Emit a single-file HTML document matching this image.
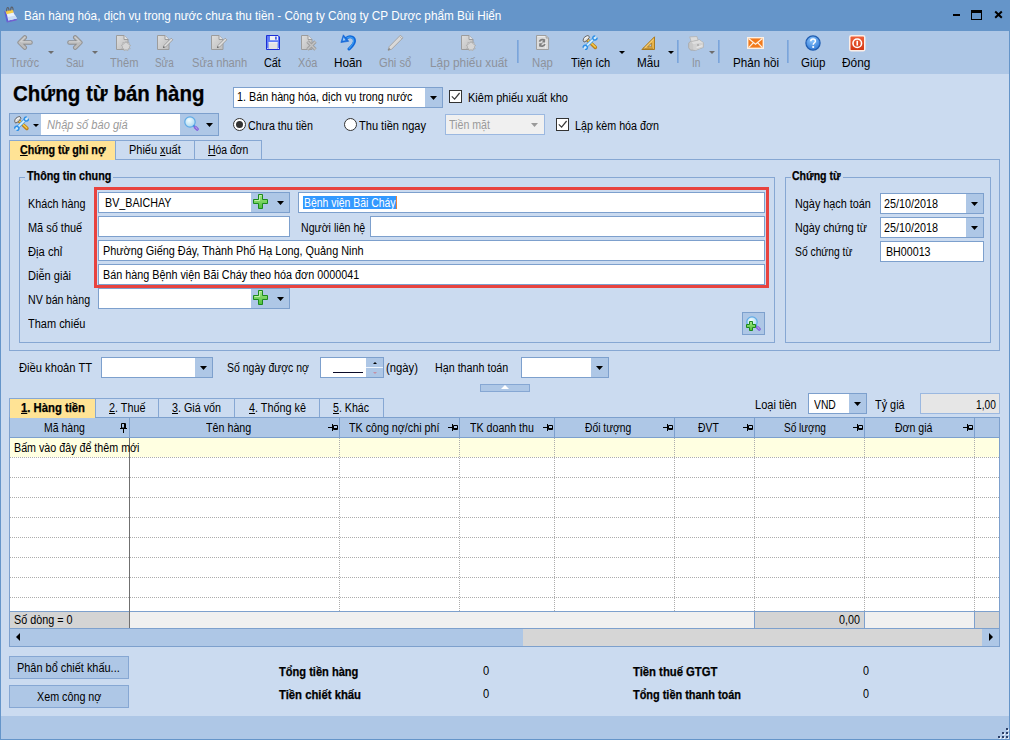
<!DOCTYPE html>
<html>
<head>
<meta charset="utf-8">
<title>Chứng từ bán hàng</title>
<style>
*{box-sizing:border-box;margin:0;padding:0}
html,body{width:1010px;height:740px;overflow:hidden;background:#cbdbf0}
body{font-family:"Liberation Sans",sans-serif;font-size:12px;color:#000;position:relative}
.a{position:absolute}
.t{position:absolute;white-space:nowrap;line-height:1;transform-origin:0 50%}
.bd{font-weight:bold;-webkit-text-stroke:.25px #000}
.inp{position:absolute;background:#fff;border:1px solid #7da0cd;height:21px}
.cb{position:absolute;top:0;right:0;bottom:0;width:18px;background:#aec7e6}
.ar{position:absolute;width:7px;height:4px}
.grp{position:absolute;border:1px solid #86a7d3}
.gm{position:absolute;top:-1px;height:1px;background:#cbdbf0}
.tab{position:absolute;border:1px solid #86a7d3;border-bottom:none}
.tab.sel{background:#ffe395}
.chk{position:absolute;width:13px;height:13px;background:#fff;border:1px solid #333}
.rad{position:absolute;width:13px;height:13px;background:#fff;border:1px solid #333;border-radius:50%}
.hd{position:absolute;top:418px;height:19px;border-right:1px solid #7da0cd}
.btn{position:absolute;height:23px;background:#aec7e6;border:1px solid #86a7d3}
.sep{position:absolute;top:40px;width:2px;height:23px;background:linear-gradient(to right,#729fd8,#94b6e2)}
.hl{position:absolute;left:10px;width:989px;height:1px;background-image:linear-gradient(to right,#adadad 50%,rgba(255,255,255,0) 50%);background-size:2px 1px}
.vl{position:absolute;top:438px;width:1px;height:173px;background-image:linear-gradient(to bottom,#adadad 50%,rgba(255,255,255,0) 50%);background-size:1px 2px}
</style>
</head>
<body>
<!-- window chrome -->
<div class="a" style="left:0;top:0;width:1010px;height:31px;background:#6595c9"></div>
<div class="a" style="left:1px;top:31px;width:1008px;height:43px;background:#aec7e6"></div>
<div class="a" style="left:1px;top:716px;width:1008px;height:23px;background:#aec7e6"></div>
<div class="a" style="left:0;top:31px;width:1px;height:709px;background:#6595c9"></div>
<div class="a" style="left:1009px;top:31px;width:1px;height:709px;background:#6595c9"></div>
<div class="a" style="left:0;top:739px;width:1010px;height:1px;background:#6595c9"></div>
<!-- window controls -->
<div class="a" style="left:953px;top:14px;width:7px;height:2px;background:#000"></div>
<div class="a" style="left:971px;top:10px;width:11px;height:10px;border:1px solid #000;border-top-width:3px"></div>
<svg class="a" style="left:994px;top:10px" width="9" height="9" viewBox="0 0 9 9"><path d="M1.2 1.6L7.8 7.8M7.8 1.6L1.2 7.8" stroke="#000" stroke-width="2" fill="none"/></svg>
<!-- shapes -->
<div class="sep" style="left:517px"></div>
<div class="sep" style="left:677px"></div>
<div class="sep" style="left:718px"></div>
<div class="sep" style="left:787px"></div>
<svg class="a" style="left:48px;top:51px" width="6" height="3" viewBox="0 0 6 3"><path d="M0 0H6L3 3Z" fill="#6e6e6e"/></svg>
<svg class="a" style="left:92px;top:51px" width="6" height="3" viewBox="0 0 6 3"><path d="M0 0H6L3 3Z" fill="#6e6e6e"/></svg>
<svg class="a" style="left:618.5px;top:51px" width="6" height="3" viewBox="0 0 6 3"><path d="M0 0H6L3 3Z" fill="#000"/></svg>
<svg class="a" style="left:667.5px;top:51px" width="6" height="3" viewBox="0 0 6 3"><path d="M0 0H6L3 3Z" fill="#000"/></svg>
<svg class="a" style="left:709px;top:51px" width="6" height="3" viewBox="0 0 6 3"><path d="M0 0H6L3 3Z" fill="#6e6e6e"/></svg>
<div class="inp" style="left:233px;top:87px;width:210px;height:21px;"><div class="cb" style="width:17px"></div></div><svg class="a" style="left:430px;top:96px" width="7" height="4" viewBox="0 0 7 4"><path d="M0 0H7L3.5 4Z" fill="#000"/></svg>
<div class="chk" style="left:449px;top:90px"><svg width="11" height="11" viewBox="0 0 11 11" style="display:block"><path d="M1.8 5.4L4.6 8.2L9.6 2" fill="none" stroke="#3a3a3a" stroke-width="1.2"/></svg></div>
<div class="a" style="left:9px;top:113px;width:210px;height:23px;background:#aec7e6;border:1px solid #7da0cd"></div>
<div class="a" style="left:41px;top:114px;width:139px;height:21px;background:#fff"></div>
<svg class="a" style="left:33px;top:124px" width="6" height="3" viewBox="0 0 6 3"><path d="M0 0H6L3 3Z" fill="#000"/></svg>
<svg class="a" style="left:206px;top:123px" width="7" height="4" viewBox="0 0 7 4"><path d="M0 0H7L3.5 4Z" fill="#000"/></svg>
<div class="rad" style="left:233px;top:118px"><div class="a" style="left:2px;top:2px;width:7px;height:7px;border-radius:50%;background:#333"></div></div>
<div class="rad" style="left:344px;top:118px"></div>
<div class="inp" style="left:445px;top:114px;width:100px;height:21px;background:#f0f0f0;border-color:#9bb8e0"></div>
<svg class="a" style="left:531px;top:123px" width="7" height="4" viewBox="0 0 7 4"><path d="M0 0H7L3.5 4Z" fill="#9a9a9a"/></svg>
<div class="chk" style="left:556px;top:118px"><svg width="11" height="11" viewBox="0 0 11 11" style="display:block"><path d="M1.8 5.4L4.6 8.2L9.6 2" fill="none" stroke="#3a3a3a" stroke-width="1.2"/></svg></div>
<div class="a" style="left:9px;top:159px;width:991px;height:192px;border:1px solid #86a7d3"></div>
<div class="tab sel" style="left:9px;top:140px;width:107px;height:20px"></div>
<div class="tab" style="left:115px;top:140px;width:80px;height:19px"></div>
<div class="tab" style="left:194px;top:140px;width:68px;height:19px"></div>
<div class="grp" style="left:19px;top:177px;width:756px;height:166px"><div class="gm" style="left:5px;width:88px"></div></div>
<div class="inp" style="left:98px;top:192px;width:192px;height:21px;"><div class="cb" style="width:38px"></div></div>
<svg class="a" style="left:277px;top:201px" width="7" height="4" viewBox="0 0 7 4"><path d="M0 0H7L3.5 4Z" fill="#000"/></svg>
<div class="inp" style="left:298px;top:192px;width:467px;height:21px;"><div class="a" style="left:4px;top:3px;width:93px;height:13px;background:#3399ff"></div><div class="a" style="left:97px;top:3px;width:1px;height:13px;background:#e8833a"></div></div>
<div class="inp" style="left:98px;top:216px;width:192px;height:21px;"></div>
<div class="inp" style="left:370px;top:216px;width:395px;height:21px;"></div>
<div class="inp" style="left:98px;top:240px;width:667px;height:21px;"></div>
<div class="inp" style="left:98px;top:264px;width:667px;height:21px;"></div>
<div class="inp" style="left:98px;top:288px;width:192px;height:21px;"><div class="cb" style="width:38px"></div></div>
<svg class="a" style="left:277px;top:297px" width="7" height="4" viewBox="0 0 7 4"><path d="M0 0H7L3.5 4Z" fill="#000"/></svg>
<div class="a" style="left:94px;top:187px;width:675px;height:101px;border:3px solid #e8433f"></div>
<div class="a" style="left:742px;top:312px;width:23px;height:23px;background:#aec7e6;border:1px solid #7da0cd"></div>
<div class="grp" style="left:785px;top:177px;width:206px;height:166px"><div class="gm" style="left:5px;width:52px"></div></div>
<div class="inp" style="left:880px;top:193px;width:104px;height:21px;"><div class="cb" style="width:17px"></div></div><svg class="a" style="left:971px;top:202px" width="7" height="4" viewBox="0 0 7 4"><path d="M0 0H7L3.5 4Z" fill="#000"/></svg>
<div class="inp" style="left:880px;top:217px;width:104px;height:21px;"><div class="cb" style="width:17px"></div></div><svg class="a" style="left:971px;top:226px" width="7" height="4" viewBox="0 0 7 4"><path d="M0 0H7L3.5 4Z" fill="#000"/></svg>
<div class="inp" style="left:880px;top:241px;width:104px;height:21px;"></div>
<div class="inp" style="left:101px;top:357px;width:112px;height:21px;"><div class="cb" style="width:17px"></div></div><svg class="a" style="left:200px;top:366px" width="7" height="4" viewBox="0 0 7 4"><path d="M0 0H7L3.5 4Z" fill="#000"/></svg>
<div class="inp" style="left:320px;top:357px;width:64px;height:21px;"><div class="cb" style="width:17px"></div><div class="a" style="left:45px;top:9px;width:17px;height:1px;background:#eef4fc"></div></div>
<div class="a" style="left:333px;top:372px;width:30px;height:1px;background:#0a0a28"></div>
<svg class="a" style="left:372.5px;top:362px" width="4" height="2" viewBox="0 0 4 2"><path d="M0 2H4L2 0Z" fill="#000"/></svg>
<svg class="a" style="left:372.5px;top:372px" width="4" height="2" viewBox="0 0 4 2"><path d="M0 0H4L2 2Z" fill="#c48fa4"/></svg>
<div class="inp" style="left:521px;top:357px;width:88px;height:21px;"><div class="cb" style="width:17px"></div></div><svg class="a" style="left:596px;top:366px" width="7" height="4" viewBox="0 0 7 4"><path d="M0 0H7L3.5 4Z" fill="#000"/></svg>
<div class="a" style="left:480px;top:384px;width:50px;height:8px;background:#aec7e6;border:1px solid #86a7d3"></div>
<svg class="a" style="left:501px;top:385px" width="8" height="4" viewBox="0 0 8 4"><path d="M0 4H8L4 0Z" fill="#fff"/></svg>
<div class="inp" style="left:808px;top:393px;width:59px;height:21px;"><div class="cb" style="width:17px"></div></div><svg class="a" style="left:854px;top:402px" width="7" height="4" viewBox="0 0 7 4"><path d="M0 0H7L3.5 4Z" fill="#000"/></svg>
<div class="inp" style="left:920px;top:393px;width:80px;height:21px;background:#e6e6e6;border-color:#9bb8e0"></div>
<div class="tab sel" style="left:9px;top:398px;width:87px;height:20px"></div>
<div class="tab" style="left:95px;top:398px;width:64px;height:19px"></div>
<div class="tab" style="left:158px;top:398px;width:77px;height:19px"></div>
<div class="tab" style="left:234px;top:398px;width:86px;height:19px"></div>
<div class="tab" style="left:319px;top:398px;width:65px;height:19px"></div>
<div class="a" style="left:9px;top:417px;width:991px;height:230px;background:#fff;border:1px solid #7da0cd"></div>
<div class="a" style="left:10px;top:418px;width:989px;height:20px;background:#aec7e6;border-bottom:1px solid #7da0cd"></div>
<div class="a" style="left:10px;top:438px;width:989px;height:19px;background:#ffffe1"></div>
<div class="a" style="left:10px;top:417px;width:85px;height:1px;background:#ffe395"></div>
<div class="hd" style="left:10px;width:120px"></div>
<svg class="a" style="left:120px;top:423px" width="7" height="10" viewBox="0 0 7 10"><path d="M1.5 0.5h4v4.5h-4zM0 5.5h7M3.5 6v4M4.5 1v4" fill="none" stroke="#000" stroke-width="1"/></svg>
<div class="hd" style="left:130px;width:210px"></div>
<svg class="a" style="left:328px;top:424px" width="10" height="7" viewBox="0 0 10 7"><path d="M5.5 1.5h4v4h-4zM4.5 0v7M0 3.5h4.5M6 4.5h3" fill="none" stroke="#000" stroke-width="1"/></svg>
<div class="hd" style="left:340px;width:120px"></div>
<svg class="a" style="left:448px;top:424px" width="10" height="7" viewBox="0 0 10 7"><path d="M5.5 1.5h4v4h-4zM4.5 0v7M0 3.5h4.5M6 4.5h3" fill="none" stroke="#000" stroke-width="1"/></svg>
<div class="hd" style="left:460px;width:95px"></div>
<svg class="a" style="left:543px;top:424px" width="10" height="7" viewBox="0 0 10 7"><path d="M5.5 1.5h4v4h-4zM4.5 0v7M0 3.5h4.5M6 4.5h3" fill="none" stroke="#000" stroke-width="1"/></svg>
<div class="hd" style="left:555px;width:120px"></div>
<svg class="a" style="left:663px;top:424px" width="10" height="7" viewBox="0 0 10 7"><path d="M5.5 1.5h4v4h-4zM4.5 0v7M0 3.5h4.5M6 4.5h3" fill="none" stroke="#000" stroke-width="1"/></svg>
<div class="hd" style="left:675px;width:80px"></div>
<svg class="a" style="left:743px;top:424px" width="10" height="7" viewBox="0 0 10 7"><path d="M5.5 1.5h4v4h-4zM4.5 0v7M0 3.5h4.5M6 4.5h3" fill="none" stroke="#000" stroke-width="1"/></svg>
<div class="hd" style="left:755px;width:110px"></div>
<svg class="a" style="left:853px;top:424px" width="10" height="7" viewBox="0 0 10 7"><path d="M5.5 1.5h4v4h-4zM4.5 0v7M0 3.5h4.5M6 4.5h3" fill="none" stroke="#000" stroke-width="1"/></svg>
<div class="hd" style="left:865px;width:110px"></div>
<svg class="a" style="left:963px;top:424px" width="10" height="7" viewBox="0 0 10 7"><path d="M5.5 1.5h4v4h-4zM4.5 0v7M0 3.5h4.5M6 4.5h3" fill="none" stroke="#000" stroke-width="1"/></svg>
<div class="hl" style="top:457px"></div>
<div class="hl" style="top:477px"></div>
<div class="hl" style="top:497px"></div>
<div class="hl" style="top:517px"></div>
<div class="hl" style="top:537px"></div>
<div class="hl" style="top:557px"></div>
<div class="hl" style="top:577px"></div>
<div class="hl" style="top:597px"></div>
<div class="vl" style="left:339px"></div>
<div class="vl" style="left:459px"></div>
<div class="vl" style="left:554px"></div>
<div class="vl" style="left:674px"></div>
<div class="vl" style="left:754px"></div>
<div class="vl" style="left:864px"></div>
<div class="vl" style="left:974px"></div>
<div class="a" style="left:10px;top:611px;width:989px;height:17px;background:#f0f0f0;border-top:1px solid #7da0cd"></div>
<div class="a" style="left:10px;top:612px;width:119px;height:16px;background:#d4d4d4"></div>
<div class="a" style="left:754px;top:612px;width:111px;height:16px;background:#d4d4d4;border-left:1px solid #7da0cd;border-right:1px solid #7da0cd"></div>
<div class="a" style="left:974px;top:612px;width:25px;height:16px;background:#d4d4d4;border-left:1px solid #7da0cd"></div>
<div class="a" style="left:129px;top:438px;width:1px;height:190px;background:#707070"></div>
<div class="a" style="left:10px;top:628px;width:989px;height:18px;background:#aec7e6;border-top:1px solid #7da0cd"></div>
<div class="a" style="left:523px;top:629px;width:459px;height:17px;background:#d6d6d6"></div>
<svg class="a" style="left:16px;top:633px" width="4" height="8" viewBox="0 0 4 8"><path d="M4 0V8L0 4Z" fill="#000"/></svg>
<svg class="a" style="left:989px;top:633px" width="4" height="8" viewBox="0 0 4 8"><path d="M0 0V8L4 4Z" fill="#000"/></svg>
<div class="btn" style="left:9px;top:656px;width:120px"></div>
<div class="btn" style="left:9px;top:685px;width:120px"></div>
<svg class="a" style="left:997px;top:727px" width="12" height="12" viewBox="0 0 12 12"><g fill="#e4edf8"><rect x="10" y="2" width="2" height="2"/><rect x="6" y="6" width="2" height="2"/><rect x="10" y="6" width="2" height="2"/><rect x="2" y="10" width="2" height="2"/><rect x="6" y="10" width="2" height="2"/><rect x="10" y="10" width="2" height="2"/></g><g fill="#2c4069"><rect x="9" y="1" width="2" height="2"/><rect x="5" y="5" width="2" height="2"/><rect x="9" y="5" width="2" height="2"/><rect x="1" y="9" width="2" height="2"/><rect x="5" y="9" width="2" height="2"/><rect x="9" y="9" width="2" height="2"/></g></svg>
<!-- icons -->
<svg width="0" height="0" style="position:absolute"><defs>
<linearGradient id="gpg" x1="0" y1="0" x2="1" y2="1"><stop offset="0" stop-color="#dedede"/><stop offset="1" stop-color="#bdbdbd"/></linearGradient>
<linearGradient id="ggr" x1="0" y1="0" x2="0" y2="1"><stop offset="0" stop-color="#a4e888"/><stop offset="1" stop-color="#4fbf3a"/></linearGradient>
<radialGradient id="gln" cx="0.4" cy="0.35" r="0.7"><stop offset="0" stop-color="#f2fbfd"/><stop offset="1" stop-color="#a6d6ef"/></radialGradient>
<radialGradient id="ghp" cx="0.45" cy="0.3" r="0.75"><stop offset="0" stop-color="#8ec8ff"/><stop offset="1" stop-color="#2a73d2"/></radialGradient>
<linearGradient id="grd" x1="0" y1="0" x2="0" y2="1"><stop offset="0" stop-color="#f0643c"/><stop offset="1" stop-color="#d23210"/></linearGradient>
<linearGradient id="gar" x1="0" y1="0" x2="0" y2="1"><stop offset="0" stop-color="#d2d2d2"/><stop offset="1" stop-color="#a2a2a2"/></linearGradient>
</defs></svg>
<svg class="a" style="left:3px;top:6px" width="15" height="17" viewBox="0 0 15 17"><path d="M1.2 5.2L9.5 3.6L13.6 13.2L3.6 15.8Z" fill="#5b5fd6"/>
<path d="M3.6 15.8L13.6 13.2L13.9 14.2L4 16.6Z" fill="#7a55cf"/>
<path d="M3.6 7.2L10.2 5.9L13.9 12.6L5.3 14.6Z" fill="#e9f2fc"/>
<path d="M5 11L12.4 9.6L13.9 12.6L5.3 14.6Z" fill="#c8dcf6"/>
<path d="M2.4 5L9.6 3.6L10.8 6.6L3.6 8.2Z" fill="#f6cf4a"/>
<path d="M3.7 5.4C3.1 0.4 6.1 0.4 6 4.8M7.8 4.6C7.2 0 10.2 0 10.1 4.2" fill="none" stroke="#5c5f66" stroke-width="1.1"/></svg>
<svg class="a" style="left:16.5px;top:34px" width="16" height="17" viewBox="0 0 16 17"><g><path d="M13.6 8.5H3.2M7.8 3.4L2.6 8.5L7.8 13.6" fill="none" stroke="#8f8f8f" stroke-width="4.4" stroke-linecap="round" stroke-linejoin="round"/><path d="M13.6 8.5H3.2M7.8 3.4L2.6 8.5L7.8 13.6" fill="none" stroke="#bcbcbc" stroke-width="2.6" stroke-linecap="round" stroke-linejoin="round"/><path d="M13.6 7.8H4.4M8 3.2L3.2 8" fill="none" stroke="#d4d4d4" stroke-width="1" stroke-linecap="round"/></g></svg>
<svg class="a" style="left:66.5px;top:34px" width="16" height="17" viewBox="0 0 16 17"><g transform="translate(16,0) scale(-1,1)"><path d="M13.6 8.5H3.2M7.8 3.4L2.6 8.5L7.8 13.6" fill="none" stroke="#8f8f8f" stroke-width="4.4" stroke-linecap="round" stroke-linejoin="round"/><path d="M13.6 8.5H3.2M7.8 3.4L2.6 8.5L7.8 13.6" fill="none" stroke="#bcbcbc" stroke-width="2.6" stroke-linecap="round" stroke-linejoin="round"/><path d="M13.6 7.8H4.4M8 3.2L3.2 8" fill="none" stroke="#d4d4d4" stroke-width="1" stroke-linecap="round"/></g></svg>
<svg class="a" style="left:115.5px;top:34.5px" width="17" height="16" viewBox="0 0 17 16"><path d="M0.5 0.5H8L12 4.5V14.5H0.5Z" fill="url(#gpg)" stroke="#9c9c9c"/><path d="M8 0.5V4.5H12" fill="#e6e6e6" stroke="#9c9c9c"/><path d="M10.0 6.4L11.1 8.2L13.1 7.5L12.9 9.7L14.8 10.4L13.2 11.9L14.2 13.8L12.1 13.8L11.7 15.9L10.0 14.6L8.3 15.9L7.9 13.8L5.8 13.8L6.8 11.9L5.2 10.4L7.1 9.7L6.9 7.5L8.9 8.2Z" fill="#d6d6d6" stroke="#a9a9a9" stroke-width=".8" stroke-linejoin="round"/></svg>
<svg class="a" style="left:156.5px;top:34.5px" width="17" height="16" viewBox="0 0 17 16"><path d="M0.5 0.5H8L12 4.5V14.5H0.5Z" fill="url(#gpg)" stroke="#9c9c9c"/><path d="M8 0.5V4.5H12" fill="#e6e6e6" stroke="#9c9c9c"/><path d="M14.2 3.2L15.8 4.8L8.6 12L6.4 12.6L7 10.4Z" fill="#e0e0e0" stroke="#9a9a9a" stroke-width=".9"/><path d="M6.4 12.6L7.3 11.7" stroke="#555" stroke-width="1.2"/></svg>
<svg class="a" style="left:210.5px;top:34.5px" width="17" height="16" viewBox="0 0 17 16"><path d="M0.5 0.5H8L12 4.5V14.5H0.5Z" fill="url(#gpg)" stroke="#9c9c9c"/><path d="M8 0.5V4.5H12" fill="#e6e6e6" stroke="#9c9c9c"/><path d="M14.2 3.2L15.8 4.8L8.6 12L6.4 12.6L7 10.4Z" fill="#e0e0e0" stroke="#9a9a9a" stroke-width=".9"/><path d="M6.4 12.6L7.3 11.7" stroke="#555" stroke-width="1.2"/></svg>
<svg class="a" style="left:266px;top:35px" width="14" height="15" viewBox="0 0 14 15"><path d="M0.5 0.5H12L13.5 2V14.5H0.5Z" fill="#5f7cf7" stroke="#1c2ed6"/>
<rect x="4" y="1" width="8" height="4.2" fill="#eef0f4"/><rect x="9" y="1.6" width="1.8" height="3" fill="#4a63e8"/>
<rect x="2.6" y="7.2" width="9" height="6.8" fill="#e2e2e2"/><rect x="2.6" y="7.2" width="9" height="1" fill="#f6f6f6"/>
<rect x="1.2" y="13" width="1" height="1" fill="#dfe4ff"/><rect x="12" y="13" width="1" height="1" fill="#dfe4ff"/></svg>
<svg class="a" style="left:300.5px;top:34.5px" width="17" height="16" viewBox="0 0 17 16"><path d="M0.5 0.5H7L11 4.5V14.5H0.5Z" fill="url(#gpg)" stroke="#9c9c9c"/><path d="M7 0.5V4.5H11" fill="#e6e6e6" stroke="#9c9c9c"/><path d="M6.5 6.5L14.5 14.5M14.5 6.5L6.5 14.5" stroke="#9e9e9e" stroke-width="3.2"/><path d="M6.5 6.5L14.5 14.5M14.5 6.5L6.5 14.5" stroke="#c4c4c4" stroke-width="1.4"/></svg>
<svg class="a" style="left:340px;top:34px" width="16" height="17" viewBox="0 0 16 17"><path d="M6.4 4.2C10 1.4 15 3 14.4 7.6C14 10.6 11.4 12.6 9 15" fill="none" stroke="#1068da" stroke-width="3" stroke-linecap="round"/><path d="M6.6 4.2C10 1.8 14.2 3.4 13.6 7.6C13.2 10.2 11 12.2 9.2 14.4" fill="none" stroke="#3c9cf2" stroke-width="1.2" stroke-linecap="round"/><path d="M3.3 0.8L0.9 8.5L8.8 7.3Z" fill="#1a6fde" stroke="#0f62d4" stroke-width=".6" stroke-linejoin="round"/><path d="M3.6 3.2L2.6 6.8L5.6 6.3Z" fill="#a4cff8"/></svg>
<svg class="a" style="left:387px;top:34px" width="17" height="17" viewBox="0 0 17 17"><path d="M13.4 1.2L16 3.8L4.6 15.2L1.2 16.2L2.2 12.6Z" fill="#d9d9d9" stroke="#a0a0a0" stroke-width=".9"/><path d="M12.4 2.4L15 5" stroke="#b4b4b4" stroke-width="1"/><path d="M1.2 16.2L2.8 14.6" stroke="#8a8a8a" stroke-width="1.4"/></svg>
<svg class="a" style="left:460.5px;top:34.5px" width="17" height="16" viewBox="0 0 17 16"><path d="M0.5 0.5H8L12 4.5V14.5H0.5Z" fill="url(#gpg)" stroke="#9c9c9c"/><path d="M8 0.5V4.5H12" fill="#e6e6e6" stroke="#9c9c9c"/><path d="M10.0 6.4L11.1 8.2L13.1 7.5L12.9 9.7L14.8 10.4L13.2 11.9L14.2 13.8L12.1 13.8L11.7 15.9L10.0 14.6L8.3 15.9L7.9 13.8L5.8 13.8L6.8 11.9L5.2 10.4L7.1 9.7L6.9 7.5L8.9 8.2Z" fill="#d6d6d6" stroke="#a9a9a9" stroke-width=".8" stroke-linejoin="round"/></svg>
<svg class="a" style="left:535.8px;top:34.6px" width="14" height="16" viewBox="0 0 14 16"><path d="M0.5 0.5H10L12.6 3.1V14.5H0.5Z" fill="#dcdcdc" stroke="#9e9e9e"/><path d="M1.5 1.5H9.6V13.5" fill="none" stroke="#ececec" stroke-width="1"/><path d="M10 0.5V3.1H12.6" fill="#c4c4c4" stroke="#9e9e9e" stroke-width=".8"/><path d="M3.4 6.6C4.4 4.4 7.4 4 8.6 5.6" fill="none" stroke="#7e7e7e" stroke-width="1.7"/><path d="M9.2 3.8V7.6H5.6Z" fill="#7e7e7e"/><path d="M9 9.2C8 11.4 5 11.8 3.8 10.2" fill="none" stroke="#7e7e7e" stroke-width="1.7"/><path d="M3.2 12V8.2H6.8Z" fill="#7e7e7e"/></svg>
<svg class="a" style="left:582px;top:35px" width="16" height="15" viewBox="0 0 15 15"><path d="M5.2 5.2L12.8 12.4" stroke="#bd7f1c" stroke-width="3.6" stroke-linecap="round"/><path d="M5.4 5L12.8 12" stroke="#f6d04a" stroke-width="1.5" stroke-linecap="round"/>
<path d="M0.7 5.6C0.5 3 2.6 1 5.8 0.5L7 2.2L4.4 5.6L1.6 7.1Z" fill="#dedede" stroke="#666" stroke-width="1" stroke-linejoin="round"/><path d="M2 4.4C2.6 3 3.8 2.2 5.4 1.9" fill="none" stroke="#fff" stroke-width="1"/>
<path d="M4 11L11 4" stroke="#4aa2ec" stroke-width="3.2"/><path d="M3.6 11.4L11.4 3.6" stroke="#d8effd" stroke-width="1.7"/>
<path d="M12.75 0.93A2.1 2.1 0 1 0 14.47 2.64" fill="#cfeafc" stroke="#2f8fe6" stroke-width="1.5"/><path d="M2.44 14.47A2.1 2.1 0 1 0 0.73 12.75" fill="#cfeafc" stroke="#2f8fe6" stroke-width="1.5"/></svg>
<svg class="a" style="left:641px;top:36px" width="15" height="15" viewBox="0 0 15 15"><path d="M13.5 0.8V13.5H0.9Z" fill="#e9b44c" stroke="#a87a22" stroke-width="1"/><path d="M10.6 7V10.8H6.8Z" fill="#aec7e6" stroke="#a87a22" stroke-width=".8"/><path d="M3 13V11.6M5 13V12M7 13V11.6M9 13V12M11 13V11.6" stroke="#7a5510" stroke-width=".7"/><path d="M12.4 3.4L3.4 12.4" stroke="#f8dc90" stroke-width=".8"/></svg>
<svg class="a" style="left:687.5px;top:35.5px" width="16" height="15" viewBox="0 0 16 15"><path d="M0.7 7.1L2.9 4.9L11.5 4.1L15.3 6.7V11.3L7.5 14.3L2.5 14.1L0.7 11.9Z" fill="#c8c8c8" stroke="#a8a8a8" stroke-width=".9" stroke-linejoin="round"/><path d="M2.9 4.9L11.5 4.1L15.3 6.7L5.2 8.3Z" fill="#dedede"/><path d="M5.2 8.3L15.3 6.7V11.3L7.5 14.3L5.2 13.4Z" fill="#d2d2d2"/><path d="M1.7 0.9L8.9 0.5L10.1 4.1L3.2 5.6Z" fill="#dcdcdc" stroke="#b2b2b2" stroke-width=".8" stroke-linejoin="round"/><path d="M8.6 11.6L14.4 9.6" stroke="#e6e6e6" stroke-width="1.2"/><circle cx="10" cy="9" r=".8" fill="#8c8c8c"/></svg>
<svg class="a" style="left:746.5px;top:37px" width="17" height="12" viewBox="0 0 17 12"><rect x="0.7" y="0.7" width="15.6" height="10.6" fill="#f27a1c" stroke="#fdf1e4" stroke-width="1.4"/><path d="M1.6 1.6L8.5 7.2L15.4 1.6M1.6 10.6L6.4 5.6M15.4 10.6L10.6 5.6" fill="none" stroke="#fdf1e4" stroke-width="1.3"/></svg>
<svg class="a" style="left:804.5px;top:34.5px" width="16" height="16" viewBox="0 0 16 16"><circle cx="8" cy="8" r="7.1" fill="url(#ghp)" stroke="#1f5cb0" stroke-width="1.2"/><path d="M5.8 6.2C5.8 3.4 10.4 3.4 10.4 6.2C10.4 7.8 8.2 7.8 8.2 9.8" fill="none" stroke="#fff" stroke-width="1.5"/><circle cx="8.2" cy="12" r="1.1" fill="#fff"/></svg>
<svg class="a" style="left:848.5px;top:34.5px" width="17" height="17" viewBox="0 0 17 17"><rect x="0.75" y="0.75" width="15" height="15" rx="1.6" fill="url(#grd)" stroke="#fbeee8" stroke-width="1.5"/><circle cx="8.25" cy="8.25" r="4.3" fill="none" stroke="#fff" stroke-width="1.6"/><rect x="7.45" y="5.8" width="1.6" height="4.8" fill="#fff"/></svg>
<svg class="a" style="left:14px;top:116px" width="15" height="15" viewBox="0 0 15 15"><path d="M5.2 5.2L12.8 12.4" stroke="#bd7f1c" stroke-width="3.6" stroke-linecap="round"/><path d="M5.4 5L12.8 12" stroke="#f6d04a" stroke-width="1.5" stroke-linecap="round"/>
<path d="M0.7 5.6C0.5 3 2.6 1 5.8 0.5L7 2.2L4.4 5.6L1.6 7.1Z" fill="#dedede" stroke="#666" stroke-width="1" stroke-linejoin="round"/><path d="M2 4.4C2.6 3 3.8 2.2 5.4 1.9" fill="none" stroke="#fff" stroke-width="1"/>
<path d="M4 11L11 4" stroke="#4aa2ec" stroke-width="3.2"/><path d="M3.6 11.4L11.4 3.6" stroke="#d8effd" stroke-width="1.7"/>
<path d="M12.75 0.93A2.1 2.1 0 1 0 14.47 2.64" fill="#cfeafc" stroke="#2f8fe6" stroke-width="1.5"/><path d="M2.44 14.47A2.1 2.1 0 1 0 0.73 12.75" fill="#cfeafc" stroke="#2f8fe6" stroke-width="1.5"/></svg>
<svg class="a" style="left:184px;top:116px" width="15" height="15" viewBox="0 0 15 15"><circle cx="6" cy="6" r="5.2" fill="url(#gln)" stroke="#5eaae6" stroke-width="1.2"/><path d="M9.4 9.4L11 11" stroke="#3f8fe0" stroke-width="1.8"/><path d="M11.4 11.4L13.2 13.2" stroke="#8463dc" stroke-width="3.2" stroke-linecap="round"/><path d="M11.6 11.2L13.2 12.8" stroke="#c9baf4" stroke-width="1" stroke-linecap="round"/></svg>
<svg class="a" style="left:253px;top:194px" width="15" height="15" viewBox="0 0 15 15"><path d="M5.5 0.5H9.5V5.5H14.5V9.5H9.5V14.5H5.5V9.5H0.5V5.5H5.5Z" fill="url(#ggr)" stroke="#1c8a1c" stroke-width="1"/><path d="M6.5 1.5H8.5M1.5 6.5H6.5V1.5" fill="none" stroke="#c8f2b4" stroke-width=".9"/></svg>
<svg class="a" style="left:253px;top:290px" width="15" height="15" viewBox="0 0 15 15"><path d="M5.5 0.5H9.5V5.5H14.5V9.5H9.5V14.5H5.5V9.5H0.5V5.5H5.5Z" fill="url(#ggr)" stroke="#1c8a1c" stroke-width="1"/><path d="M6.5 1.5H8.5M1.5 6.5H6.5V1.5" fill="none" stroke="#c8f2b4" stroke-width=".9"/></svg>
<svg class="a" style="left:746px;top:316px" width="15" height="15" viewBox="0 0 15 15"><circle cx="6" cy="6" r="5.2" fill="url(#gln)" stroke="#5eaae6" stroke-width="1.2"/><path d="M9.4 9.4L11 11" stroke="#3f8fe0" stroke-width="1.8"/><path d="M11.4 11.4L13.2 13.2" stroke="#8463dc" stroke-width="3.2" stroke-linecap="round"/><path d="M11.6 11.2L13.2 12.8" stroke="#c9baf4" stroke-width="1" stroke-linecap="round"/><path d="M3.5 5.5H6.5V8.5H9.5V11.5H6.5V14.5H3.5V11.5H0.5V8.5H3.5Z" fill="url(#ggr)" stroke="#1c8a1c" stroke-width="1"/></svg>

<!-- text -->
<div class="t" style="left:23.6px;top:10.24px;font-size:12px;transform:scaleX(0.9785);color:#fff;">Bán hàng hóa, dịch vụ trong nước chưa thu tiền - Công ty Công ty CP Dược phẩm Bùi Hiển</div>
<div class="t" style="left:9.9px;top:57.24px;font-size:12px;transform:scaleX(0.8903);color:#8d929b;">Trước</div>
<div class="t" style="left:66.1px;top:57.24px;font-size:12px;transform:scaleX(0.8380);color:#8d929b;">Sau</div>
<div class="t" style="left:110.2px;top:57.24px;font-size:12px;transform:scaleX(0.9255);color:#8d929b;">Thêm</div>
<div class="t" style="left:155.0px;top:57.24px;font-size:12px;transform:scaleX(0.8275);color:#8d929b;">Sửa</div>
<div class="t" style="left:192.0px;top:57.24px;font-size:12px;transform:scaleX(0.9290);color:#8d929b;">Sửa nhanh</div>
<div class="t" style="left:264.0px;top:57.24px;font-size:12px;transform:scaleX(0.9043);color:#000;">Cất</div>
<div class="t" style="left:298.0px;top:57.24px;font-size:12px;transform:scaleX(0.9083);color:#8d929b;">Xóa</div>
<div class="t" style="left:334.4px;top:57.24px;font-size:12px;transform:scaleX(0.9795);color:#000;">Hoãn</div>
<div class="t" style="left:379.4px;top:57.24px;font-size:12px;transform:scaleX(0.9283);color:#8d929b;">Ghi sổ</div>
<div class="t" style="left:430.4px;top:57.24px;font-size:12px;transform:scaleX(0.9856);color:#8d929b;">Lập phiếu xuất</div>
<div class="t" style="left:531.6px;top:57.24px;font-size:12px;transform:scaleX(0.9448);color:#8d929b;">Nạp</div>
<div class="t" style="left:571.0px;top:57.24px;font-size:12px;transform:scaleX(0.9278);color:#000;">Tiện ích</div>
<div class="t" style="left:636.6px;top:57.24px;font-size:12px;transform:scaleX(0.9767);color:#000;">Mẫu</div>
<div class="t" style="left:691.8px;top:57.24px;font-size:12px;transform:scaleX(0.8487);color:#8d929b;">In</div>
<div class="t" style="left:732.5px;top:57.24px;font-size:12px;transform:scaleX(0.9710);color:#000;">Phản hồi</div>
<div class="t" style="left:801.0px;top:57.24px;font-size:12px;transform:scaleX(0.9622);color:#000;">Giúp</div>
<div class="t" style="left:842.3px;top:57.24px;font-size:12px;transform:scaleX(0.9900);color:#000;">Đóng</div>
<div class="t bd" style="left:13.4px;top:83.80px;font-size:21.5px;transform:scaleX(0.9545);">Chứng từ bán hàng</div>
<div class="t" style="left:236.6px;top:91.34px;font-size:12px;transform:scaleX(0.8978);">1. Bán hàng hóa, dịch vụ trong nước</div>
<div class="t" style="left:468.0px;top:91.54px;font-size:12px;transform:scaleX(0.9197);">Kiêm phiếu xuất kho</div>
<div class="t" style="left:46.9px;top:119.44px;font-size:12px;transform:scaleX(0.9233);font-style:italic;color:#9a9a9a;">Nhập số báo giá</div>
<div class="t" style="left:248.0px;top:119.64px;font-size:12px;transform:scaleX(0.8935);">Chưa thu tiền</div>
<div class="t" style="left:359.0px;top:119.64px;font-size:12px;transform:scaleX(0.9214);">Thu tiền ngay</div>
<div class="t" style="left:449.0px;top:118.84px;font-size:12px;transform:scaleX(0.8865);color:#9a9a9a;">Tiền mặt</div>
<div class="t" style="left:575.0px;top:119.64px;font-size:12px;transform:scaleX(0.8942);">Lập kèm hóa đơn</div>
<div class="t bd" style="left:20.0px;top:144.14px;font-size:12px;transform:scaleX(0.8915);"><u>C</u>hứng từ ghi nợ</div>
<div class="t" style="left:129.3px;top:144.14px;font-size:12px;transform:scaleX(0.9115);">Phiếu <u>x</u>uất</div>
<div class="t" style="left:208.3px;top:144.14px;font-size:12px;transform:scaleX(0.8674);"><u>H</u>óa đơn</div>
<div class="t bd" style="left:26.7px;top:170.44px;font-size:12px;transform:scaleX(0.8970);">Thông tin chung</div>
<div class="t" style="left:28.4px;top:198.44px;font-size:12px;transform:scaleX(0.8960);">Khách hàng</div>
<div class="t" style="left:28.4px;top:222.24px;font-size:12px;transform:scaleX(0.9128);">Mã số thuế</div>
<div class="t" style="left:28.4px;top:246.24px;font-size:12px;transform:scaleX(0.9322);">Địa chỉ</div>
<div class="t" style="left:28.4px;top:270.14px;font-size:12px;transform:scaleX(0.9207);">Diễn giải</div>
<div class="t" style="left:28.4px;top:294.14px;font-size:12px;transform:scaleX(0.8864);">NV bán hàng</div>
<div class="t" style="left:28.4px;top:318.14px;font-size:12px;transform:scaleX(0.9154);">Tham chiếu</div>
<div class="t" style="left:104.5px;top:197.24px;font-size:12px;transform:scaleX(0.8928);">BV_BAICHAY</div>
<div class="t" style="left:304.0px;top:197.24px;font-size:12px;transform:scaleX(0.8681);color:#fff;">Bệnh viện Bãi Cháy</div>
<div class="t" style="left:300.6px;top:222.04px;font-size:12px;transform:scaleX(0.8842);">Người liên hệ</div>
<div class="t" style="left:103.0px;top:245.24px;font-size:12px;transform:scaleX(0.9059);">Phường Giếng Đáy, Thành Phố Hạ Long, Quảng Ninh</div>
<div class="t" style="left:103.0px;top:269.24px;font-size:12px;transform:scaleX(0.8997);">Bán hàng Bệnh viện Bãi Cháy theo hóa đơn 0000041</div>
<div class="t bd" style="left:792.0px;top:170.44px;font-size:12px;transform:scaleX(0.8777);">Chứng từ</div>
<div class="t" style="left:794.6px;top:198.24px;font-size:12px;transform:scaleX(0.9029);">Ngày hạch toán</div>
<div class="t" style="left:794.6px;top:222.24px;font-size:12px;transform:scaleX(0.8975);">Ngày chứng từ</div>
<div class="t" style="left:794.6px;top:246.24px;font-size:12px;transform:scaleX(0.8595);">Số chứng từ</div>
<div class="t" style="left:884.0px;top:198.24px;font-size:12px;transform:scaleX(0.8991);">25/10/2018</div>
<div class="t" style="left:884.0px;top:222.24px;font-size:12px;transform:scaleX(0.8991);">25/10/2018</div>
<div class="t" style="left:885.5px;top:246.24px;font-size:12px;transform:scaleX(0.8892);">BH00013</div>
<div class="t" style="left:18.9px;top:362.24px;font-size:12px;transform:scaleX(0.9312);">Điều khoản TT</div>
<div class="t" style="left:227.0px;top:362.24px;font-size:12px;transform:scaleX(0.8739);">Số ngày được nợ</div>
<div class="t" style="left:386.0px;top:362.24px;font-size:12px;transform:scaleX(0.9407);">(ngày)</div>
<div class="t" style="left:435.3px;top:362.24px;font-size:12px;transform:scaleX(0.8931);">Hạn thanh toán</div>
<div class="t" style="left:754.6px;top:399.24px;font-size:12px;transform:scaleX(0.9190);">Loại tiền</div>
<div class="t" style="left:814.4px;top:398.64px;font-size:12px;transform:scaleX(0.8602);">VND</div>
<div class="t" style="left:874.8px;top:399.24px;font-size:12px;transform:scaleX(0.9055);">Tỷ giá</div>
<div class="t" style="left:976.0px;top:398.64px;font-size:12px;transform:scaleX(0.8476);">1,00</div>
<div class="t bd" style="left:20.5px;top:401.64px;font-size:12px;transform:scaleX(0.9407);"><u>1</u>. Hàng tiền</div>
<div class="t" style="left:108.5px;top:401.64px;font-size:12px;transform:scaleX(0.9012);"><u>2</u>. Thuế</div>
<div class="t" style="left:172.0px;top:401.64px;font-size:12px;transform:scaleX(0.8955);"><u>3</u>. Giá vốn</div>
<div class="t" style="left:248.5px;top:401.64px;font-size:12px;transform:scaleX(0.9023);"><u>4</u>. Thống kê</div>
<div class="t" style="left:333.0px;top:401.64px;font-size:12px;transform:scaleX(0.8841);"><u>5</u>. Khác</div>
<div class="t" style="left:43.8px;top:422.14px;font-size:12px;transform:scaleX(0.8757);">Mã hàng</div>
<div class="t" style="left:206.2px;top:422.14px;font-size:12px;transform:scaleX(0.8932);">Tên hàng</div>
<div class="t" style="left:348.5px;top:422.14px;font-size:12px;transform:scaleX(0.8927);">TK công nợ/chi phí</div>
<div class="t" style="left:469.5px;top:422.14px;font-size:12px;transform:scaleX(0.8867);">TK doanh thu</div>
<div class="t" style="left:585.3px;top:422.14px;font-size:12px;transform:scaleX(0.8584);">Đối tượng</div>
<div class="t" style="left:697.9px;top:422.14px;font-size:12px;transform:scaleX(0.8667);">ĐVT</div>
<div class="t" style="left:783.5px;top:422.14px;font-size:12px;transform:scaleX(0.8390);">Số lượng</div>
<div class="t" style="left:895.4px;top:422.14px;font-size:12px;transform:scaleX(0.8787);">Đơn giá</div>
<div class="t" style="left:13.5px;top:442.14px;font-size:12px;transform:scaleX(0.8925);">Bấm vào đây để thêm mới</div>
<div class="t" style="left:14.0px;top:614.24px;font-size:12px;transform:scaleX(0.8991);">Số dòng = 0</div>
<div class="t" style="left:838.5px;top:614.24px;font-size:12px;transform:scaleX(0.8990);">0,00</div>
<div class="t" style="left:17.3px;top:662.34px;font-size:12px;transform:scaleX(0.9109);">Phân bổ chiết khấu...</div>
<div class="t" style="left:36.6px;top:691.24px;font-size:12px;transform:scaleX(0.8956);">Xem công nợ</div>
<div class="t bd" style="left:279.0px;top:666.04px;font-size:12px;transform:scaleX(0.9233);">Tổng tiền hàng</div>
<div class="t bd" style="left:279.0px;top:689.34px;font-size:12px;transform:scaleX(0.9410);">Tiền chiết khấu</div>
<div class="t" style="left:482.7px;top:665.24px;font-size:12px;transform:scaleX(0.9271);">0</div>
<div class="t" style="left:482.7px;top:688.24px;font-size:12px;transform:scaleX(0.9271);">0</div>
<div class="t bd" style="left:633.3px;top:666.04px;font-size:12px;transform:scaleX(0.9401);">Tiền thuế GTGT</div>
<div class="t bd" style="left:633.3px;top:689.34px;font-size:12px;transform:scaleX(0.9102);">Tổng tiền thanh toán</div>
<div class="t" style="left:863.0px;top:665.24px;font-size:12px;transform:scaleX(0.8972);">0</div>
<div class="t" style="left:863.0px;top:688.24px;font-size:12px;transform:scaleX(0.8972);">0</div>
</body>
</html>
